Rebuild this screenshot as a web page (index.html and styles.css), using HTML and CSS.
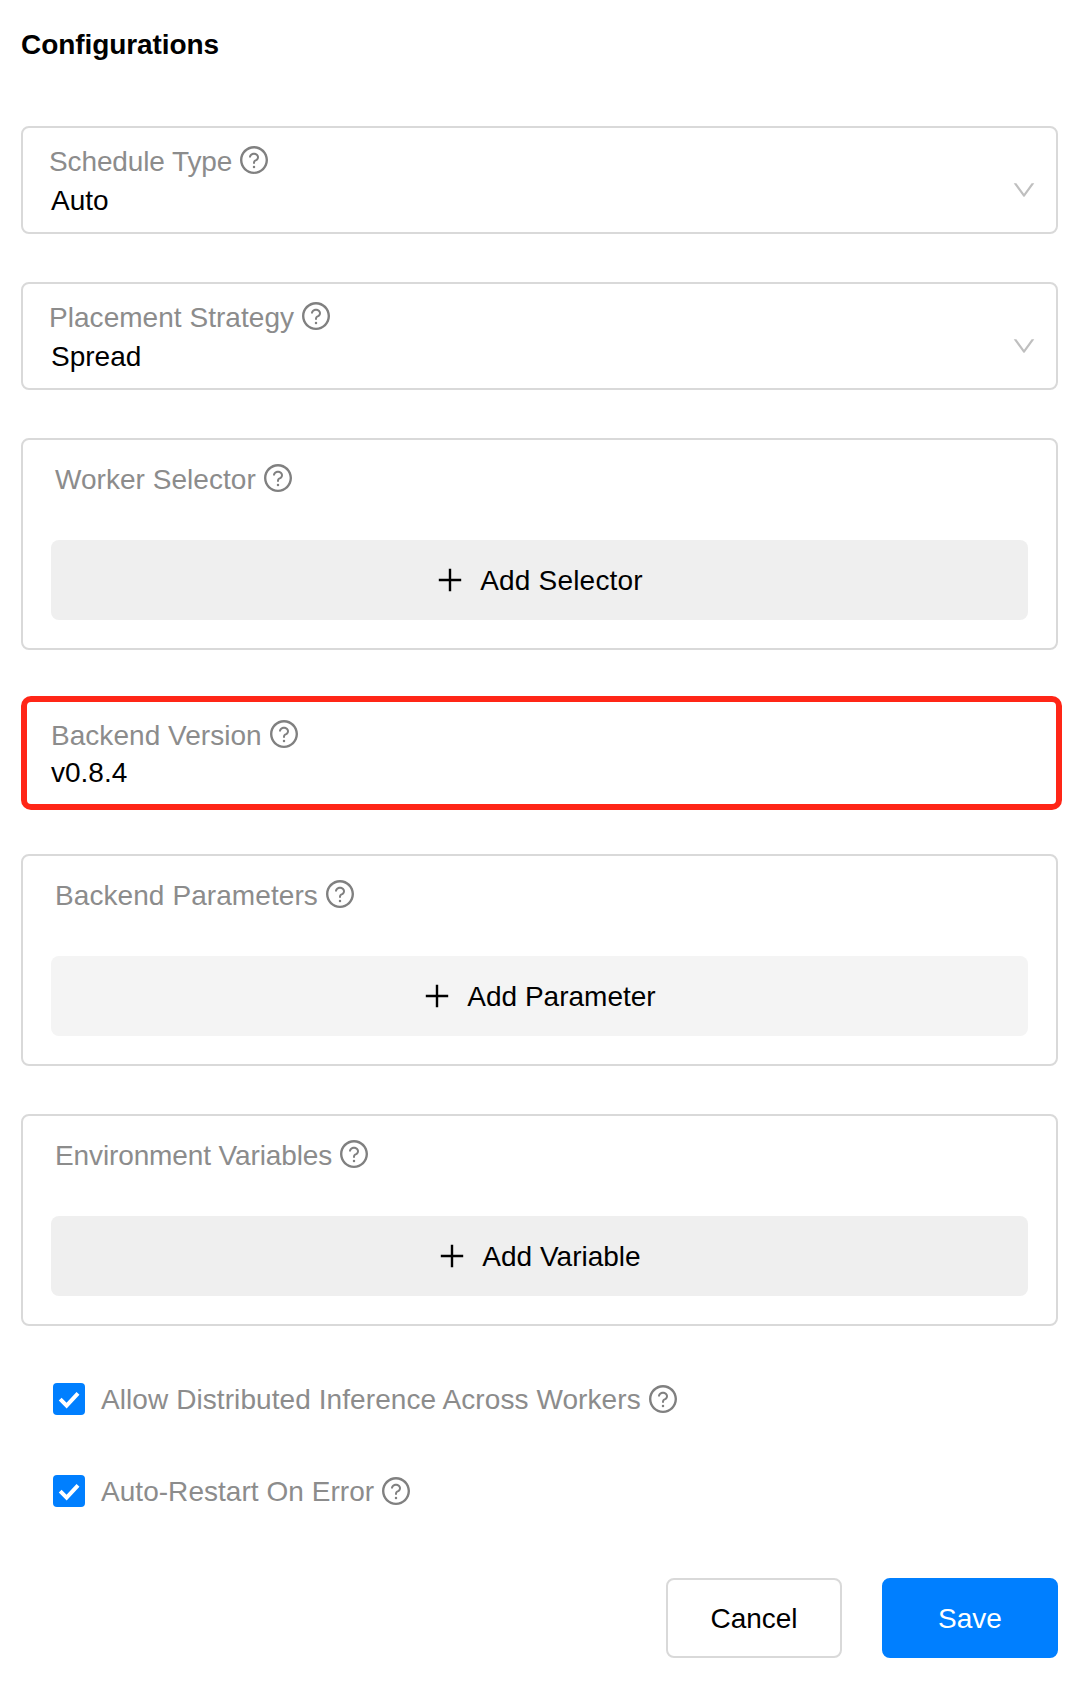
FILE: index.html
```html
<!DOCTYPE html>
<html lang="en">
<head>
<meta charset="utf-8">
<title>Configurations</title>
<link rel="stylesheet" href="styles.css">
</head>
<body>
<svg class="sprite" aria-hidden="true">
  <symbol id="help" viewBox="64 64 896 896">
    <path d="M512 64C264.6 64 64 264.6 64 512s200.6 448 448 448 448-200.6 448-448S759.4 64 512 64zm0 820c-205.4 0-372-166.6-372-372s166.6-372 372-372 372 166.6 372 372-166.6 372-372 372z"/>
    <path d="M623.6 316.7C593.6 290.4 554 276 512 276s-81.6 14.5-111.6 40.7C369.2 344 352 380.7 352 420v7.6c0 4.4 3.6 8 8 8h48c4.4 0 8-3.6 8-8V420c0-44.1 43.1-80 96-80s96 35.9 96 80c0 31.1-22 59.6-56.1 72.7-21.2 8.1-39.2 22.3-52.1 40.9-13.1 19-19.9 41.8-19.9 64.9V620c0 4.4 3.6 8 8 8h48c4.4 0 8-3.6 8-8v-22.7a48.3 48.3 0 0 1 30.9-44.8c59-22.7 97.1-74.7 97.1-132.5.1-39.3-17.1-76-48.3-103.3zM472 732a40 40 0 1 0 80 0 40 40 0 1 0-80 0z"/>
  </symbol>
  <symbol id="down" viewBox="64 64 896 896">
    <path d="M884 256h-75c-5.1 0-9.9 2.5-12.9 6.6L512 654.2 227.9 262.6c-3-4.1-7.8-6.6-12.9-6.6h-75c-6.5 0-10.3 7.4-6.5 12.7l352.6 486.1c12.8 17.6 39 17.6 51.7 0l352.6-486.1c3.9-5.3.1-12.7-6.4-12.7z"/>
  </symbol>
  <symbol id="plus" viewBox="0 0 28 28">
    <path d="M12.8 2.8h2.4v10h10v2.4h-10v10h-2.4v-10h-10v-2.4h10z"/>
  </symbol>
  <symbol id="check" viewBox="0 0 32 32">
    <path d="M7.2 16.2L13.6 22.6L25 10.4" fill="none" stroke="#fff" stroke-width="4"/>
  </symbol>
</svg>

<form class="form">
  <h1 class="title">Configurations</h1>

  <div class="field select">
    <div class="field-body">
      <div class="label label-tight">Schedule Type<svg class="help"><use href="#help"/></svg></div>
      <div class="value">Auto</div>
    </div>
    <svg class="arrow"><use href="#down"/></svg>
  </div>

  <div class="field select">
    <div class="field-body">
      <div class="label">Placement Strategy<svg class="help"><use href="#help"/></svg></div>
      <div class="value">Spread</div>
    </div>
    <svg class="arrow"><use href="#down"/></svg>
  </div>

  <div class="field group">
    <div class="label">Worker Selector<svg class="help"><use href="#help"/></svg></div>
    <button type="button" class="add add-wide"><svg class="plus"><use href="#plus"/></svg>Add Selector</button>
  </div>

  <div class="field highlight">
    <div class="label">Backend Version<svg class="help"><use href="#help"/></svg></div>
    <div class="value">v0.8.4</div>
  </div>

  <div class="field group">
    <div class="label label-loose">Backend Parameters<svg class="help"><use href="#help"/></svg></div>
    <button type="button" class="add add-light"><svg class="plus"><use href="#plus"/></svg>Add Parameter</button>
  </div>

  <div class="field group">
    <div class="label label-tight">Environment Variables<svg class="help"><use href="#help"/></svg></div>
    <button type="button" class="add"><svg class="plus"><use href="#plus"/></svg>Add Variable</button>
  </div>

  <div class="checks">
    <div class="check-row">
      <svg class="box"><use href="#check"/></svg>
      <div class="label label-loose">Allow Distributed Inference Across Workers<svg class="help"><use href="#help"/></svg></div>
    </div>
    <div class="check-row">
      <svg class="box"><use href="#check"/></svg>
      <div class="label">Auto-Restart On Error<svg class="help"><use href="#help"/></svg></div>
    </div>
  </div>

  <div class="actions">
    <button type="button" class="btn">Cancel</button>
    <button type="button" class="btn btn-primary">Save</button>
  </div>
</form>
</body>
</html>
```

FILE: styles.css
```css
* {
  box-sizing: border-box;
}

body {
  margin: 0;
  background: #fff;
  color: #000;
  font: 28px/35px "Liberation Sans", Arial, sans-serif;
}

.sprite {
  display: none;
}

.form {
  display: flex;
  flex-direction: column;
  width: 1058px;
  padding: 27px 0 46px 21px;
}

.title {
  margin: 0 0 64px;
  font-size: 28px;
  font-weight: 700;
  line-height: 35px;
  letter-spacing: -0.07px;
}

.field {
  margin-bottom: 48px;
  border: 2px solid #d9d9d9;
  border-radius: 8px;
  background: #fff;
}

.select {
  display: flex;
  justify-content: space-between;
  height: 108px;
  padding: 16px 20px 0 26px;
}

.select .value {
  padding: 4px 0 0 2px;
}

.arrow {
  width: 24px;
  height: 24px;
  margin-top: 34px;
  fill: #bfbfbf;
}

.label {
  display: flex;
  gap: 8px;
  color: #8c8c8c;
  letter-spacing: 0.04px;
  white-space: nowrap;
}

.label-tight {
  letter-spacing: -0.12px;
}

.label-loose {
  letter-spacing: 0.08px;
}

.help {
  width: 28px;
  height: 28px;
  margin-top: 2px;
  fill: #808080;
}

.group {
  height: 212px;
  padding: 22px 28px 0;
}

.group .label {
  padding-left: 4px;
}

.add {
  display: flex;
  justify-content: center;
  gap: 16px;
  width: 100%;
  height: 80px;
  margin-top: 43px;
  padding: 23px 0 0;
  border: 0;
  border-radius: 8px;
  background: #efefef;
  color: #000;
  font: inherit;
}

.add-light {
  background: #f4f4f4;
}

.add-wide {
  letter-spacing: 0.2px;
}

.plus {
  width: 28px;
  height: 28px;
  margin-top: 3px;
}

.highlight {
  width: 1041px;
  height: 114px;
  margin: -2px 0 44px;
  padding: 16px 24px 0;
  border: 6px solid #ff2617;
  border-radius: 10px;
}

.highlight .value {
  padding-top: 2px;
}

.checks {
  display: flex;
  flex-direction: column;
  gap: 57px;
  margin-top: 8px;
  padding-left: 32px;
}

.check-row {
  display: flex;
  gap: 16px;
}

.check-row .help {
  margin-top: 3px;
}

.box {
  width: 32px;
  height: 32px;
  margin-top: 1px;
  border-radius: 4px;
  background: #007fff;
}

.actions {
  display: flex;
  justify-content: flex-end;
  gap: 40px;
  margin-top: 69px;
}

.btn {
  width: 176px;
  height: 80px;
  padding: 1px 0 0;
  border: 2px solid #d9d9d9;
  border-radius: 8px;
  background: #fff;
  color: #000;
  font: inherit;
}

.btn-primary {
  border-color: #007fff;
  background: #007fff;
  color: #fff;
}
```
